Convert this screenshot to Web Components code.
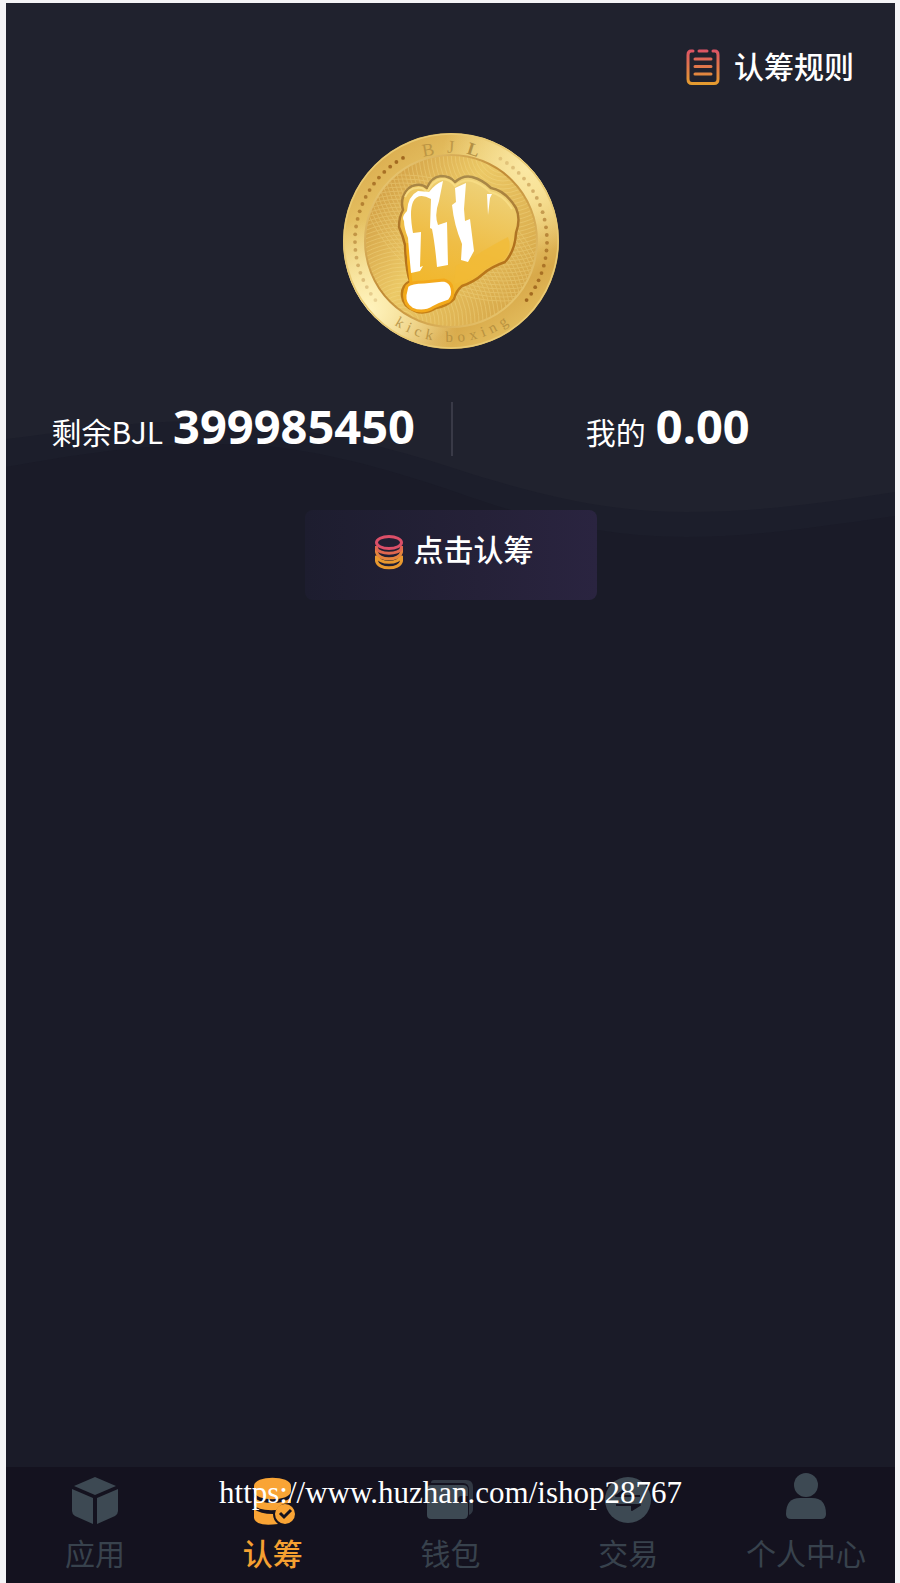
<!DOCTYPE html>
<html lang="zh-CN">
<head>
<meta charset="utf-8">
<meta name="viewport" content="width=device-width, initial-scale=1">
<title>认筹</title>
<style>
  html, body {
    height: 100%;
  }
  body {
    margin: 0;
    background: #f4f4f6;
    color: #fff;
    font-family: "Noto Sans", "Noto Sans CJK SC", sans-serif;
    font-size: 30px;
  }
</style>
</head>
<body>
<subscribe-page>
  <rules-link slot="top" href="#rules">认筹规则</rules-link>
  <coin-logo></coin-logo>
  <balance-row>
    <balance-item label="剩余BJL" value="399985450"></balance-item>
    <balance-item label="我的" value="0.00"></balance-item>
  </balance-row>
  <subscribe-button>点击认筹</subscribe-button>
  <tab-bar slot="bottom">
    <tab-item icon="cube" href="#apps">应用</tab-item>
    <tab-item icon="coins" href="#subscribe" active>认筹</tab-item>
    <tab-item icon="wallet" href="#wallet">钱包</tab-item>
    <tab-item icon="trade" href="#trade">交易</tab-item>
    <tab-item icon="user" href="#me">个人中心</tab-item>
  </tab-bar>
  <site-mark slot="bottom">https://www.huzhan.com/ishop28767</site-mark>
</subscribe-page>

<script>
class BaseElement extends HTMLElement {
  constructor() {
    super();
    this._sR = this.attachShadow({ mode: "open" });
  }

  connectedCallback() {
    this._sR.innerHTML = this.render();
  }
}

class SubscribePage extends BaseElement {
  render() {
    return `
      <style>
        :host {
          display: flex;
          min-height: 100%;
          box-sizing: border-box;
          padding: 3px 5px 0 6px;
        }
        .screen {
          position: relative;
          flex: 1;
          display: flex;
          flex-direction: column;
          background: #1a1b28;
        }
        .waves {
          position: absolute;
          left: 0;
          top: 0;
          width: 100%;
          height: 537px;
        }
        header, main, footer {
          position: relative;
        }
        header {
          display: flex;
          justify-content: flex-end;
          padding: 42px 41px 0;
        }
        main {
          flex: 1;
          display: flex;
          flex-direction: column;
          align-items: center;
          padding-top: 44px;
        }
      </style>
      <div class="screen">
        <svg class="waves" viewBox="0 0 889 537" preserveAspectRatio="none" aria-hidden="true">
          <path fill="#1c1e2b" d="M0 0H889V513C800 526 740 534 680 534C600 534 530 518 444 487C370 462 290 441 220 441C130 441 70 452 0 464Z"/>
          <path fill="#20222e" d="M0 0H889V489C810 501 750 509 680 509C600 509 530 492 444 464C370 440 290 422 200 418C120 418 70 428 0 436Z"/>
        </svg>
        <header><slot name="top"></slot></header>
        <main><slot></slot></main>
        <footer><slot name="bottom"></slot></footer>
      </div>
    `;
  }
}

class RulesLink extends BaseElement {
  render() {
    return `
      <style>
        :host { display: block; }
        a {
          display: flex;
          align-items: center;
          gap: 14px;
          color: #fff;
          text-decoration: none;
          font-weight: 500;
          line-height: 44px;
        }
        svg { width: 34px; height: 38px; }
      </style>
      <a href="${this.getAttribute("href")}">
        <svg viewBox="0 0 34 38" fill="none" stroke="url(#g)" stroke-width="3" stroke-linecap="round" aria-hidden="true">
          <defs>
            <linearGradient id="g" gradientUnits="userSpaceOnUse" x1="0" y1="0" x2="0" y2="38">
              <stop offset="0" stop-color="#dc4f68"/>
              <stop offset="1" stop-color="#e5a02c"/>
            </linearGradient>
          </defs>
          <path d="M7 3H5Q2 3 2 7V31Q2 35.500 6 35.500H28Q32 35.500 32 31V7Q32 3 29 3H27M13 3H21M9 11H25M9 18.500H25M9 26H25"/>
        </svg>
        <slot></slot>
      </a>
    `;
  }
}

class CoinLogo extends BaseElement {
  // dots on an arc of the coin's rim, angles in degrees clockwise from the top
  dots(from, to, count, color) {
    let out = "";
    for (let i = 0; i < count; i++) {
      const fade = count > 1 ? i / (count - 1) : 0;
      const a = (from + (to - from) * fade) * Math.PI / 180;
      const x = (108 + 96 * Math.sin(a)).toFixed(1);
      const y = (108 - 96 * Math.cos(a)).toFixed(1);
      out += `<circle cx="${x}" cy="${y}" r="1.900" fill="${color}" opacity="${(0.9 - fade * 0.7).toFixed(2)}"/>`;
    }
    return out;
  }

  rings() {
    let out = "";
    for (let r = 8; r < 150; r += 4) {
      out += `<circle cx="60" cy="190" r="${r}"/><circle cx="160" cy="20" r="${r}"/>`;
    }
    return out;
  }

  render() {
    return `
      <style>
        :host { display: block; }
        svg { display: block; width: 216px; height: 216px; }
        text { font-family: "Liberation Serif", serif; }
      </style>
      <svg viewBox="0 0 216 216" role="img" aria-label="BJL kick boxing">
        <defs>
          <linearGradient id="rim" x1="0.200" y1="0" x2="0.850" y2="1">
            <stop offset="0" stop-color="#d8a84b"/>
            <stop offset="0.250" stop-color="#e6c263"/>
            <stop offset="0.500" stop-color="#f2d67c"/>
            <stop offset="0.780" stop-color="#d8a94a"/>
            <stop offset="1" stop-color="#e9c767"/>
          </linearGradient>
          <radialGradient id="shineLeft" cx="0.120" cy="0.820" r="0.420">
            <stop offset="0" stop-color="#fff3bd"/>
            <stop offset="1" stop-color="#fff3bd" stop-opacity="0"/>
          </radialGradient>
          <radialGradient id="shineRight" cx="0.850" cy="0.160" r="0.400">
            <stop offset="0" stop-color="#fbe8a4"/>
            <stop offset="1" stop-color="#fbe8a4" stop-opacity="0"/>
          </radialGradient>
          <linearGradient id="face" x1="0" y1="0.200" x2="1" y2="0.900">
            <stop offset="0" stop-color="#cf9b42"/>
            <stop offset="0.400" stop-color="#ecc967"/>
            <stop offset="1" stop-color="#d3a245"/>
          </linearGradient>
          <linearGradient id="edge" x1="0" y1="0" x2="1" y2="1">
            <stop offset="0" stop-color="#f6dc87"/>
            <stop offset="0.450" stop-color="#c08a35"/>
            <stop offset="1" stop-color="#f3d67d"/>
          </linearGradient>
          <linearGradient id="fist" x1="0.300" y1="1" x2="0.600" y2="0">
            <stop offset="0" stop-color="#f3b41f"/>
            <stop offset="0.500" stop-color="#efbd45"/>
            <stop offset="1" stop-color="#eed27a"/>
          </linearGradient>
          <linearGradient id="outline" x1="0.500" y1="0" x2="0.500" y2="1">
            <stop offset="0" stop-color="#a98a4a"/>
            <stop offset="0.500" stop-color="#b0701d"/>
            <stop offset="1" stop-color="#c47f17"/>
          </linearGradient>
          <clipPath id="inner"><circle cx="108" cy="108" r="85"/></clipPath>
          <path id="arcTop" d="M20 108A88 88 0 0 1 196 108"/>
          <path id="arcBottom" d="M7 108A101 101 0 0 0 209 108"/>
        </defs>
        <circle cx="108" cy="108" r="108" fill="url(#rim)"/>
        <circle cx="108" cy="108" r="108" fill="url(#shineLeft)"/>
        <circle cx="108" cy="108" r="108" fill="url(#shineRight)"/>
        <circle cx="108" cy="108" r="107" fill="none" stroke="#e9ca74" stroke-width="1.500"/>
        <circle cx="108" cy="108" r="86" fill="url(#face)" stroke="url(#edge)" stroke-width="2"/>
        <g clip-path="url(#inner)" fill="none" stroke="#f6de8d" stroke-width="1" opacity="0.350">${this.rings()}</g>
        ${this.dots(-30, -128, 22, "#9a5f19")}
        ${this.dots(128, 31, 22, "#9a5f19")}
        <text font-size="18" fill="#a68137" letter-spacing="12"><textPath href="#arcTop" startOffset="52%" text-anchor="middle"><tspan opacity="0.600">BJ</tspan><tspan font-weight="bold" opacity="0.800">L</tspan></textPath></text>
        <text font-size="15" fill="#b08a3b" opacity="0.800" letter-spacing="5"><textPath href="#arcBottom" startOffset="51%" text-anchor="middle">kick boxing</textPath></text>
        <g stroke-linejoin="round">
          <path d="M60 64Q64 53 73 52Q80 51 84 55Q88 44 98 43Q107 43 112 49Q120 42 129 44Q140 47 148 55Q163 58 173 75Q178 86 173 100Q172 118 162 129Q148 134 140 141Q131 149 119 153Q113 158 111 166Q104 173 93 175Q82 182 72 178Q60 174 59 163Q58 153 67 148Q63 138 62 112Q60 103 56 94Q56 84 60 77Q58 70 60 64Z" fill="url(#fist)" stroke="url(#outline)" stroke-width="2.500"/>
          <path d="M62 64Q66 55 74 55Q81 54 84 60Q89 47 99 46Q107 46 112 53Q120 46 129 48Q139 51 147 59Q161 62 169 76" fill="none" stroke="#f7dc83" stroke-width="2"/>
          <path d="M68 150Q65 128 65 110" fill="none" stroke="#f5ad16" stroke-width="3"/>
          <path d="M135 121Q153 110 165 104Q170 118 160 127Q145 133 137 139Q126 147 111 151L113 133Z" fill="#f2ba35" opacity="0.700"/>
          <path d="M61 88Q58 84 64 78Q65 63 75 58L86 59Q92 51 100 48L96 68Q91 82 95 92L104 89L105 132L94 134Q92 111 89 96L87 95L88 66Q75 59 70 69Q66 78 70 100L78 99L77 134L80 133L77 138L68 140Q66 119 65 105Q61 95 61 88Z" fill="#fff"/>
          <path d="M112 55L123 50L121 76L122 88L127 86L131 118L125 129L118 127L119 111Q111 92 109 72L113 69Z" fill="#fff"/>
          <path d="M144 61L149 61L147 65L145 82Z" fill="#fff"/>
          <path d="M64 153Q68 149 81 149L101 147Q108 149 109 155Q111 163 106 168Q97 171 91 174Q80 181 69 176Q61 171 62 162Z" fill="#fff" stroke="#f3a91b" stroke-width="3"/>
        </g>
      </svg>
    `;
  }
}

class BalanceRow extends BaseElement {
  render() {
    return `
      <style>
        :host {
          position: relative;
          display: grid;
          grid-template-columns: 1fr 1fr;
          align-items: start;
          box-sizing: border-box;
          width: 100%;
          height: 54px;
          margin-top: 53px;
          padding: 0 10px;
        }
        .divider {
          position: absolute;
          left: 50%;
          top: 0;
          width: 2px;
          height: 54px;
          background: #393a47;
        }
      </style>
      <slot></slot>
      <div class="divider"></div>
    `;
  }
}

class BalanceItem extends BaseElement {
  render() {
    return `
      <style>
        :host {
          display: flex;
          justify-content: center;
          align-items: baseline;
          gap: 10px;
          line-height: 48px;
        }
        strong { font-size: 47px; font-weight: 700; }
        .label { font-family: "Noto Sans CJK SC", sans-serif; }
      </style>
      <span class="label">${this.getAttribute("label")}</span>
      <strong>${this.getAttribute("value")}</strong>
    `;
  }
}

class SubscribeButton extends BaseElement {
  render() {
    return `
      <style>
        :host { display: block; margin-top: 54px; }
        button {
          display: flex;
          justify-content: center;
          align-items: center;
          gap: 10px;
          width: 292px;
          height: 90px;
          padding: 0 0 6px 6px;
          border: none;
          border-radius: 8px;
          background: linear-gradient(90deg, #1d1d2f, #252138 60%, #2a2440);
          color: #fff;
          font: inherit;
          font-weight: 500;
          line-height: 44px;
        }
        svg { width: 30px; height: 36px; }
        .text { padding-bottom: 4px; }
      </style>
      <button type="button">
        <svg viewBox="0 0 30 36" fill="none" stroke-width="3" aria-hidden="true">
          <g stroke="#e8992f">
            <path d="M2.500 22V27C4 36 26 36 27.500 27V22"/>
            <path d="M2.500 21.500C4 30.500 26 30.500 27.500 21.500"/>
          </g>
          <path stroke="#e5833e" d="M2.500 13V18C4 27 26 27 27.500 18V13"/>
          <path stroke="#e0674f" d="M2.500 12V14C4 21 26 21 27.500 14V12"/>
          <ellipse stroke="#dc4f68" cx="15" cy="8.500" rx="12.500" ry="6"/>
        </svg>
        <span class="text"><slot></slot></span>
      </button>
    `;
  }
}

class TabBar extends BaseElement {
  render() {
    return `
      <style>
        :host { display: block; }
        nav {
          display: grid;
          grid-template-columns: repeat(5, 1fr);
          height: 116px;
          background: #14121f;
        }
      </style>
      <nav><slot></slot></nav>
    `;
  }
}

const icons = {
  cube: `
    <path d="M24 1L45 10L24 19L3 10Z"/>
    <path d="M1 13L22 22V48L4 40Q1 38 1 35Z"/>
    <path d="M47 13L26 22V48L44 40Q47 38 47 35Z"/>`,
  coins: `
    <path d="M5 10C5-1 42-1 42 10V15C42 26 5 26 5 15Z"/>
    <path d="M5 21C12 29 35 29 42 21V27Q32 26 27 34Q9 35 5 29Z"/>
    <path d="M5 33Q11 38 24 38Q24 44 29 48Q7 51 5 42Z"/>
    <circle cx="36" cy="38" r="10"/>
    <path d="M31 37L35 41L42 34" fill="none" stroke="#14121f" stroke-width="3"/>`,
  wallet: `
    <path d="M8 4H40Q47 4 47 11V33Q47 37 43 39V14Q43 7 37 7H5Q5 4 8 4Z" opacity="0.700"/>
    <path d="M5 9H37Q42 9 42 14V38Q42 43 37 43H5Q1 43 1 39V13Q1 9 5 9Z"/>
    <path d="M35 20H42V27H35Q32 27 32 23.500Q32 20 35 20Z" fill="#14121f"/>`,
  trade: `
    <circle cx="24" cy="24" r="23"/>
    <path d="M36 20H12L20 14V20M12 29H36L28 34V29" fill="#14121f" stroke="#14121f" stroke-width="2" stroke-linejoin="round"/>`,
  user: `
    <circle cx="24" cy="9" r="12"/>
    <path d="M4 38Q4 22 18 22H30Q44 22 44 38Q44 43 39 43H9Q4 43 4 38Z"/>`
};

class TabItem extends BaseElement {
  render() {
    const active = this.hasAttribute("active");
    return `
      <style>
        :host { display: block; }
        a {
          display: flex;
          flex-direction: column;
          align-items: center;
          gap: 8px;
          padding-top: 9px;
          color: #38424d;
          text-decoration: none;
          line-height: 44px;
          white-space: nowrap;
        }
        a.active { color: #f5a031; font-weight: 500; }
        svg { width: 48px; height: 48px; overflow: visible; fill: #3d4953; }
        .active svg { fill: #f9a435; }
      </style>
      <a href="${this.getAttribute("href")}"${active ? ` class="active" aria-current="page"` : ""}>
        <svg viewBox="0 0 48 48" aria-hidden="true">${icons[this.getAttribute("icon")]}</svg>
        <slot></slot>
      </a>
    `;
  }
}

class SiteMark extends BaseElement {
  render() {
    return `
      <style>
        :host {
          position: absolute;
          left: 0;
          right: 0;
          top: 9px;
          text-align: center;
          color: #fff;
          font-family: "Liberation Serif", serif;
          font-size: 31px;
          line-height: 34px;
          pointer-events: none;
        }
      </style>
      <slot></slot>
    `;
  }
}

customElements.define("subscribe-page", SubscribePage);
customElements.define("rules-link", RulesLink);
customElements.define("coin-logo", CoinLogo);
customElements.define("balance-row", BalanceRow);
customElements.define("balance-item", BalanceItem);
customElements.define("subscribe-button", SubscribeButton);
customElements.define("tab-bar", TabBar);
customElements.define("tab-item", TabItem);
customElements.define("site-mark", SiteMark);
</script>
</body>
</html>
